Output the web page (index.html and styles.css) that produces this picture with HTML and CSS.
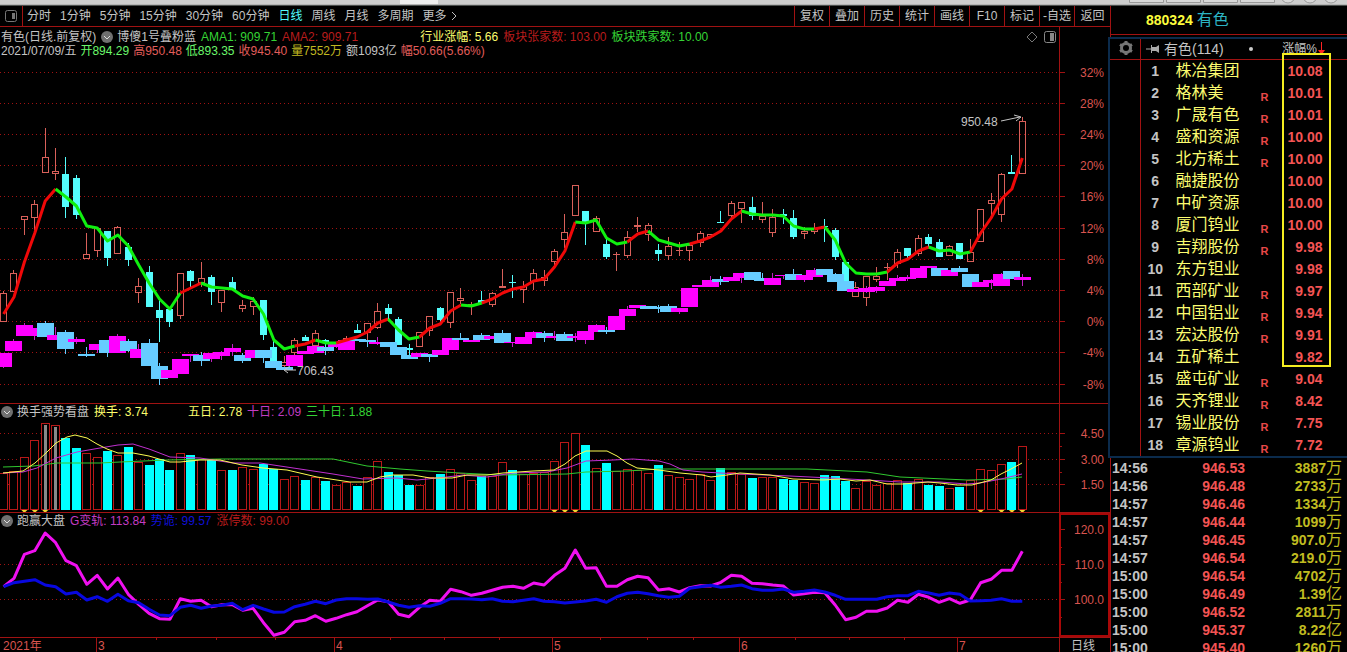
FILE: index.html
```html
<!DOCTYPE html>
<html lang="zh-CN">
<head>
<meta charset="utf-8">
<title>有色 880324</title>
<link rel="stylesheet" href="styles.css">
</head>
<body>
<svg class="strip" viewBox="0 0 1347 6" preserveAspectRatio="none" aria-hidden="true">
  <rect width="1347" height="5" fill="#cdcdcd"/><rect y="4" width="1347" height="1" fill="#b4b4b4"/><rect y="5" width="1347" height="1" fill="#4c504e"/>
  <rect x="400" width="38" height="4" fill="#eee"/>
  <g fill="#d8d8d8" stroke="#999"><path d="M1129.5 0v2.5h34V0M1166.5 0v2.5h34V0M1203.5 0v2.5h34V0M1240.5 0v2.5h34V0"/><circle cx="1288" cy="-4" r="7"/><circle cx="1310" cy="-4" r="7"/><circle cx="1331" cy="-4" r="7"/></g>
</svg>
<div class="app">
  <main class="chart">
    <nav class="toolbar">
      <button class="layout" aria-label="布局"><svg width="12" height="12" viewBox="0 0 12 12"><rect x=".5" y=".5" width="11" height="11" rx="2" fill="none" stroke="#777"/><path d="M7 3h3v6H7z" fill="#777"/></svg></button>
      <div class="periods">
        <button>分时</button><button>1分钟</button><button>5分钟</button><button>15分钟</button><button>30分钟</button><button>60分钟</button><button class="on">日线</button><button>周线</button><button>月线</button><button>多周期</button><button class="more">更多<svg width="6" height="10" viewBox="0 0 6 10"><path d="M1 1l4 4-4 4" fill="none" stroke="#c0c0c0"/></svg></button>
      </div>
      <div class="tools">
        <button>复权</button><button>叠加</button><button>历史</button><button>统计</button><button>画线</button><button>F10</button><button>标记</button><button>-自选</button><button>返回</button>
      </div>
    </nav>

    <section class="panel">
      <svg class="plot" id="price" viewBox="0 27 1110 376" role="img" aria-label="日线"></svg>
      <div class="legend main">
        <div class="line">
          <span>有色(日线.前复权)</span>
          <svg class="badge" viewBox="0 0 12 12"><circle cx="6" cy="6" r="6" fill="#707070"/><path d="M3 5l3 3 3-3" fill="none" stroke="#ddd"/></svg>
          <span>博傻1号叠粉蓝</span><span class="green">AMA1: 909.71</span><span class="red">AMA2: 909.71</span>
          <span class="yellow apart">行业涨幅: 5.66</span><span class="red">板块张家数: 103.00</span><span class="green">板块跌家数: 10.00</span>
        </div>
        <div class="line quote">
          <span>2021/07/09/五</span><span class="lime">开894.29</span><span class="rose">高950.48</span><span class="lime">低893.35</span><span class="rose">收945.40</span><span class="olive">量7552万</span><span>额1093亿</span><span class="rose">幅50.66(5.66%)</span>
        </div>
      </div>
      <div class="corner">
        <svg width="12" height="12" viewBox="0 0 12 12"><path d="M6 1l5 5-5 5-5-5z" fill="none" stroke="#777"/></svg>
        <svg width="12" height="12" viewBox="0 0 12 12"><rect x=".5" y=".5" width="11" height="11" rx="2" fill="none" stroke="#888"/><path d="M6 2h4v8H6z" fill="#888"/></svg>
      </div>
    </section>

    <section class="panel">
      <svg class="plot" id="turnover" viewBox="0 404 1110 108" role="img" aria-label="换手"></svg>
      <div class="legend">
        <div class="line">
          <svg class="badge" viewBox="0 0 12 12"><circle cx="6" cy="6" r="6" fill="#707070"/><path d="M3 5l3 3 3-3" fill="none" stroke="#ddd"/></svg>
          <span>换手强势看盘</span><span class="yellow">换手: 3.74</span><span class="yellow gap">五日: 2.78</span><span class="violet">十日: 2.09</span><span class="green">三十日: 1.88</span>
        </div>
      </div>
    </section>

    <section class="panel">
      <svg class="plot" id="strength" viewBox="0 513 1110 124" role="img" aria-label="跑赢大盘"></svg>
      <div class="legend">
        <div class="line">
          <svg class="badge" viewBox="0 0 12 12"><circle cx="6" cy="6" r="6" fill="#707070"/><path d="M3 5l3 3 3-3" fill="none" stroke="#ddd"/></svg>
          <span>跑赢大盘</span><span class="violet">G变轨: 113.84</span><span class="blue">势诡: 99.57</span><span class="red">涨停数: 99.00</span>
        </div>
      </div>
    </section>
    <svg class="plot" id="time" viewBox="0 638 1110 14" role="img" aria-label="时间"></svg>
  </main>

  <aside class="side">
    <h1 class="code"><b>880324</b> <span>有色</span></h1>
    <section class="stocks">
      <header class="stocks-head">
        <svg class="gear" viewBox="0 0 16 16"><circle cx="8" cy="8" r="4.5" fill="none" stroke="#777" stroke-width="3"/><path d="M8 1v14M2 4.500l12 7M2 11.500l12-7" stroke="#777" stroke-width="3"/><circle cx="8" cy="8" r="3" fill="#000"/></svg>
        <div class="stocks-title">
          <svg width="14" height="10" viewBox="0 0 14 10"><path d="M0 5h5" stroke="#aaa"/><path d="M5 1h1v2h4l3-2v8l-3-2H6v2H5z" fill="#aaa"/></svg>
          <span>有色(114)</span><i class="dot"></i><span class="sort">涨幅%</span><svg width="7" height="14" viewBox="0 0 7 14"><path d="M3.500 0v10" stroke="#f22"/><path d="M0 8h7l-3.500 5z" fill="#f22"/></svg>
        </div>
      </header>
      <table><tbody id="stocks"></tbody></table>
      <div class="mark"></div>
    </section>
    <table class="ticks"><tbody id="ticks"></tbody></table>
  </aside>
</div>
<script src="charts.js"></script>
</body>
</html>
```
FILE: styles.css
```css
* { box-sizing: border-box; }

body {
  margin: 0;
  height: 100vh;
  overflow: hidden;
  background: #000;
  color: #c4c4c4;
  font: 12px/14px "Liberation Sans", "Noto Sans CJK SC", sans-serif;
}

button {
  margin: 0;
  padding: 0;
  border: 0;
  background: none;
  color: inherit;
  font: inherit;
  white-space: nowrap;
}

.strip { display: block; width: 100%; height: 6px; }
.app { display: grid; grid-template-columns: minmax(0, 1fr) 237px; }

.toolbar {
  display: flex;
  height: 21px;
  border-bottom: 1px solid #a01212;
}
.layout {
  display: flex;
  align-items: center;
  justify-content: center;
  width: 23px;
  border-right: 1px solid #a01212;
}
.periods { display: flex; gap: 9px; padding-left: 4px; flex: 1; }
.periods .on { color: #54fcfc; }
.more { display: flex; align-items: center; gap: 4px; }
.tools { display: flex; }
.tools button { width: 35px; border-left: 1px solid #a01212; }
.tools button:last-child { width: 36px; }

.panel { position: relative; border-bottom: 1px solid #a01212; }
.plot { display: block; width: 100%; height: auto; }
.plot text { font-size: 12px; fill: #d9544f; }
.plot .plain { fill: #c4c4c4; }

.legend { position: absolute; top: 1px; left: 1px; }
.legend.main { top: 3px; }
.line { display: flex; align-items: center; gap: 5px; white-space: nowrap; }
.quote { gap: 4px; }
.badge { width: 12px; height: 12px; margin-right: -1px; }
.apart { margin-left: 57px; }
.gap { margin-left: 35px; }
.corner { position: absolute; top: 4px; right: 54px; display: flex; gap: 6px; }

.green { color: #35d335; }
.lime { color: #6bf76b; }
.red { color: #b81c1c; }
.rose { color: #e05d5a; }
.yellow { color: #fcfc6c; }
.olive { color: #c0b820; }
.violet { color: #c23cc2; }
.blue { color: #1010d8; }

.side { height: calc(100vh - 6px); border-left: 1px solid #a01212; }
.code {
  display: flex;
  align-items: center;
  gap: 4px;
  height: 29px;
  margin: 0;
  padding-left: 35px;
  border-bottom: 1px solid #a01212;
  font-size: 14px;
  font-weight: 400;
}
.code b { color: #fcfc3c; }
.code span { color: #2cb4c4; font-size: 16px; }

.stocks {
  position: relative;
  margin: 2px 0 0 -3px;
  background: #000;
  border: solid #0b2b4c;
  border-width: 2px 0 2px 2px;
}
.stocks-head { display: flex; height: 21px; border-bottom: 1px solid #a01212; }
.gear { width: 16px; height: 16px; margin: 1px 6px 0 8px; }
.stocks-title {
  display: flex;
  align-items: center;
  flex: 1;
  padding: 0 22px 0 5px;
  border-left: 1px solid #a01212;
  font-size: 14px;
}
.stocks-title span { margin-left: 4px; }
.dot { width: 4px; height: 4px; margin: 0 auto; border-radius: 2px; background: #ccc; }
.stocks-title .sort { margin-right: 1px; font-size: 12px; }

table { border-collapse: collapse; width: 100%; table-layout: fixed; }
td { padding: 0; white-space: nowrap; font-size: 14px; font-weight: 700; }

.stocks table { width: calc(100% - 30px); margin-left: 30px; border-left: 1px solid #a01212; }
.stocks tr { height: 22px; }
.no { width: 29px; text-align: center; }
.name { width: 91px; padding-left: 6px; color: #fcfc70; font-size: 16px; font-weight: 400; }
.margin { width: 12px; padding-top: 8px; color: #e84848; font-size: 11px; }
.pct { padding-right: 24px; color: #f45454; text-align: right; }
.mark {
  position: absolute;
  top: 14px;
  right: 16px;
  width: 49px;
  height: 314px;
  border: 2px solid #f4ec20;
}

.ticks { margin-top: 1px; }
.ticks tr { height: 18px; }
.ticks .clock { width: 60px; padding-left: 1px; }
.ticks .price { width: 74px; color: #f45454; text-align: right; }
.ticks .amount { padding-right: 5px; color: #c0bc20; text-align: right; }
.amount span { font-size: 16px; font-weight: 400; }
```
FILE: charts.js
```js
const STEP = 10.395, X0 = 3.6;
const cx = i => X0 + i * STEP;
const rows = s => s.trim().split(/\s+/);

/* top, bottom, high, low; "d" marks a falling day */
const candles = rows(`
293,322,291,322 273,292,270,292 216,220,216,235 204,218,200,230 157,173,128,173 171,174,148,180
174,207,157,218,d 178,215,175,219,d 254,259,233,259 228,251,228,257 231,258,231,266,d 227,254,226,254
247,260,243,266,d 286,293,278,303 272,307,266,307,d 310,318,298,342,d 309,322,309,327,d 273,316,273,319
271,281,270,287,d 278,283,262,287 277,292,275,305,d 290,303,290,312 282,290,277,290,d 305,309,300,312
301,307,297,315 300,335,300,340,d 347,363,340,363,d 362,366,356,368 340,353,338,358 337,341,335,341,d
333,346,330,346 340,343,339,348,d 343,345,343,345 338,341,336,341 330,333,324,333,d 323,333,323,347
311,328,303,329 308,314,304,320,d 319,345,317,345,d 348,350,344,355,d 332,347,332,347 316,331,316,336
308,320,307,323,d 292,323,292,328 298,301,288,304 304,305,302,315 300,303,291,303,d 293,305,292,307
286,288,269,288 282,283,275,298,d 286,290,281,303 273,282,269,290 277,281,270,286 251,262,249,266
232,240,214,248 185,216,185,216 211,223,211,245,d 218,232,216,232 244,257,238,259,d 254,255,252,271
237,256,231,258 225,227,217,232 225,235,223,241 250,254,244,261,d 246,256,237,260 250,251,242,256
245,251,243,261 233,243,231,247 234,237,234,237 222,223,211,223,d 203,216,201,219 202,209,202,223
207,216,197,220,d 216,220,202,223 217,233,209,237 214,216,209,224,d 218,237,210,239,d 231,234,227,239
228,232,223,234 226,227,219,242,d 230,257,228,260,d 262,281,260,285,d 287,297,282,297 276,298,276,306
276,280,267,282 267,268,263,280 252,264,249,268 248,256,248,258,d 238,254,235,256 237,244,234,247,d
242,257,239,257,d 246,256,245,256 243,259,243,259,d 252,262,239,262 209,242,209,242 200,204,193,215
174,215,173,222 172,174,155,174,d 121,174,117,174`);

/* overlaid market index: top, bottom, high, low; "b" marks a falling day */
const index = rows(`
353,367,353,368 341,351,339,351 325,336,323,336 328,336,328,340 323,337,321,337,b 335,340,327,340
332,349,330,354,b 339,342,337,344 354,356,347,357,b 344,350,344,353 340,353,340,357,b 336,353,334,353
341,351,339,352,b 349,358,344,358 343,366,339,366,b 366,379,363,385,b 370,378,370,378 359,374,359,374
354,356,354,362 355,361,352,366,b 353,359,353,362 352,356,351,360 348,352,344,356 355,361,353,363,b
350,358,350,358 350,358,350,363,b 361,368,361,368,b 367,370,367,370,b 355,366,355,366 351,354,351,354
346,353,346,353 347,351,347,355,b 344,347,344,348 340,350,340,350 339,341,339,341,b 340,342,340,347,b
342,344,337,345 342,347,342,347,b 347,355,347,355,b 355,359,355,359,b 353,357,353,357 354,357,354,362,b
350,355,350,355 338,350,338,350 338,340,333,340,b 340,342,340,342 335,340,333,340,b 336,339,336,339
333,343,330,343,b 342,343,342,347 337,344,337,344 332,338,331,338 333,338,331,342,b 336,338,331,340
334,341,332,341,b 336,338,333,342 331,340,331,344 325,332,324,332 330,332,327,334,b 316,330,316,330
309,316,306,316 305,308,305,308 306,309,306,309,b 307,309,305,313,b 306,312,304,312,b 308,312,308,314
288,307,288,307 285,287,285,287 280,287,276,287 279,282,276,285,b 277,281,277,281 273,278,273,283
272,280,272,280,b 278,281,273,281,b 278,285,273,285 275,276,275,279 274,280,269,280,b 275,280,275,282
270,277,268,277 269,275,269,275,b 274,282,273,282,b 281,291,281,291,b 289,292,289,292 288,292,286,293
287,291,286,293 281,286,281,286 278,281,275,281 277,279,275,281 268,278,268,278 266,268,266,268
268,276,268,276,b 270,276,270,276 268,272,266,272,b 274,287,274,287,b 282,287,282,287 280,283,279,289
274,286,273,286 271,279,271,279,b 277,280,274,286`);

/* a letter starts a new colour run */
const ama = rows(`r 314 297 262 233 201 189 g 197 206 226 228 241 235 246 265 283 299 309 293 r 288 283
g 287 288 289 296 299 314 340 349 346 r 344 340 g 343 343 r 340 337 332 323 319 g 330 339 337
r 328 324 311 305 g 306 303 r 299 293 289 287 281 279 267 251 222 g 223 220 238 244 242 r 234 231
g 240 243 246 244 r 241 237 231 219 211 g 214 215 215 216 226 229 229 r 227 g 240 263 273 274 274 272
r 263 259 251 247 g 251 250 254 252 r 233 218 199 189 158`);

const turnover = rows(`473 471 457 440 423 425 438d 448d 453 457 451d 455 447d 462 465d 459d 470d 453 455d 459
460d 470 470d 467 469 464d 469d 479 476 480d 477 481d 485 482 486d 477 461 472d 475d 485d 485 477 474d 469
473 480 476d 476 462 470d 474 473 472 461 442 433 445d 468 463d 471 469 470 473 465d 475 477 479 474 480
468d 472 474 478d 477 477 479d 480d 482 483 475d 476d 481d 488 481 485 483 480 483d 479 485d 486d 488
487d 480 469 470 464 462d 446`);

const ma5 = "3,473 23,471 35,463 46,453 56,443 67,437 75,435 87,438 97,444 107,449 118,453 133,453 149,456 159,459 170,462 180,462 200,460 220,460 242,465 263,468 287,470 317,477 350,482 367,482 380,477 393,475 413,475 430,478 452,478 467,475 487,475 503,473 533,471 554,470 565,464 575,456 586,451 607,451 617,456 627,463 637,468 659,470 680,473 702,475 711,477 727,475 740,473 770,475 793,479 823,480 840,479 856,481 870,480 887,484 903,484 928,482 940,483 957,485 972,485 991,480 1001,474 1011,469 1022,463";
const ma10 = "3,473 23,472 37,468 56,458 77,452 100,448 118,445 133,444 149,449 170,457 200,458 233,463 260,463 300,469 333,474 363,479 397,478 417,480 447,477 463,475 487,477 513,473 547,472 567,468 586,461 613,460 633,459 659,461 670,464 683,470 702,472 740,474 790,476 830,478 867,480 900,482 940,482 967,484 980,483 1001,479 1022,474";
const ma30 = "3,467 33,466 57,463 100,463 120,462 167,460 220,459 333,459 367,466 400,469 427,471 460,473 500,475 567,474 586,472 627,471 659,469 807,469 867,472 900,477 967,480 1007,479 1022,477";

const gain = rows(`560 535 463 452 399 428 482 497 553 526 567 534 583 613 640 656 658 596 604 601 620 614 614
631 625 668 706 697 665 661 647 664 655 644 635 617 600 605 643 650 622 601 604 568 575 586 580 571 562 559
565 549 555 526 505 450 505 503 559 559 539 529 533 570 566 576 563 557 558 547 526 529 550 551 555 558 585
581 577 578 615 659 652 634 634 624 601 607 583 592 607 596 610 600 548 538 511 511 454`);
const base = rows(`560 548 544 539 555 560 582 577 600 590 604 583 602 608 628 645 647 622 616 625 618 616 610
629 616 627 637 636 620 613 604 611 600 596 596 598 597 606 616 622 617 619 610 596 596 597 599 596 604 605
601 596 604 605 609 606 603 598 607 590 580 577 581 587 592 589 565 560 556 562 559 555 566 571 571 567 577
574 570 576 586 598 598 598 598 590 587 587 574 579 586 579 583 603 602 601 596 604 604`);

const rect = (x, y, w, h, attr) => `<rect x="${Math.round(x)}" y="${y}" width="${w}" height="${h}" ${attr}/>`;
const vline = (x, y1, y2, c) => `<path d="M${Math.round(x) + .5} ${y1}V${y2}" stroke="${c}"/>`;
const poly = (pts, c, w) => `<polyline points="${pts}" fill="none" stroke="${c}" stroke-width="${w}" stroke-linejoin="round"/>`;
const DIM = "#a01212";

function grid(levels, y1, y2, minor) {
  let s = `<path d="M1059.5 ${y1}V${y2}" stroke="${DIM}"/>`;
  for (const [y, label, plain] of levels) {
    if (!plain) s += `<path d="M0 ${y}.5H1059" stroke="${DIM}" stroke-dasharray="1 3"/>`;
    s += `<path d="M1060 ${y}.5h5" stroke="${DIM}"/><text x="1104" y="${y + 5}" text-anchor="end">${label}</text>`;
  }
  for (const y of minor || []) s += `<path d="M1060 ${y}.5h2" stroke="${DIM}"/>`;
  return s;
}

function drawPrice() {
  let s = grid([[72, "32%"], [103, "28%"], [134, "24%"], [165, "20%"], [196, "16%"], [228, "12%"], [259, "8%"],
    [290, "4%"], [321, "0%"], [352, "-4%"], [384, "-8%"]], 27, 403);
  s += '<g shape-rendering="crispEdges">';
  candles.forEach((row, i) => {
    const [t, b, h, l, d] = row.split(","), x = Math.round(cx(i) - .5), c = d ? "#54fcfc" : "#d9605a";
    if (+h < +t) s += vline(x, h, t, c);
    if (+l > +b) s += vline(x, b, l, c);
    if (d || b - t < 3) s += rect(x - 3, t, 7, Math.max(1, b - t), `fill="${c}"`);
    else s += `<rect x="${x - 2.5}" y="${+t + .5}" width="6" height="${b - t - 1}" fill="none" stroke="${c}"/>`;
  });
  index.forEach((row, i) => {
    const [t, b, h, l, d] = row.split(","), x = Math.round(cx(i) - .5), c = d ? "#66ccff" : "#ff00ff";
    s += vline(x, h, l, d ? c : "#c020c0") + rect(x - 8, t, 17, b - t, `fill="${c}"`);
  });
  s += "</g>";
  let color = "", pts = [], last = "", i = 0;
  const flush = () => { if (pts.length > 1) s += poly(pts.join(" "), color, 3); };
  for (const v of ama) {
    if (v === "r" || v === "g") {
      flush();
      color = v === "r" ? "#f00808" : "#10f010";
      pts = last ? [last] : [];
    } else {
      last = `${cx(i++).toFixed(1)},${v}`;
      pts.push(last);
    }
  }
  flush();
  s += `<text class="plain" x="961" y="126">950.48</text><path d="M1001 121l19-4M1014 115l7 2-5 4" fill="none" stroke="#c4c4c4"/>
    <text class="plain" x="297" y="375">706.43</text><path d="M285 370h11M290 366l-6 4 4 3" fill="none" stroke="#c4c4c4"/>`;
  price.innerHTML = s;
}

function drawTurnover() {
  let s = grid([[433, "4.50"], [459, "3.00"], [484, "1.50"]], 404, 512, [446, 472]) + '<g shape-rendering="crispEdges">';
  turnover.forEach((row, i) => {
    const y = parseInt(row), x = Math.round(cx(i) - .5);
    if (row.endsWith("d")) s += rect(x - 4, y, 9, 510 - y, 'fill="#00ffff"');
    else s += `<rect x="${x - 3.5}" y="${y + .5}" width="8" height="${509 - y}" fill="#000" stroke="#b81818"/>`;
    if (i === 4 || i === 5) s += rect(x - 1, y + 2, 3, 508 - y, 'fill="#888"');
  });
  s += "</g>" + poly(ma30, "#30c830", 1) + poly(ma10, "#c030d0", 1) + poly(ma5, "#fcfc50", 1);
  for (const i of [2, 3, 4, 53, 54, 55, 94, 96, 97, 98])
    s += `<path d="M${(cx(i) - 3).toFixed(1)} 510h6l-2 2h-2z" fill="#f4d830"/>`;
  turnoverSvg.innerHTML = s;
}

function drawStrength() {
  const line = a => a.map((v, i) => `${cx(i).toFixed(1)},${(400 + v / 3).toFixed(1)}`).join(" ");
  strength.innerHTML = grid([[529, "120.0", 1], [564, "110.0"], [599, "100.0"]], 513, 637, [547, 582, 617])
    + poly(line(gain), "#f010f0", 3) + poly(line(base), "#0808e0", 3)
    + '<rect x="1060" y="514" width="49" height="122" fill="none" stroke="#a80808" stroke-width="2"/>';
}

function drawTime() {
  let s = '<text x="3" y="650">2021年</text><text class="plain" x="1071" y="650">日线</text>' + vline(1059, 638, 652, DIM);
  for (const [x, n] of [[97, 3], [335, 4], [553, 5], [740, 6], [958, 7]])
    s += vline(x - 1, 638, 652, DIM) + `<text x="${x + 1}" y="650">${n}</text>`;
  for (const x of [156, 216, 275, 390, 444, 499, 600, 647, 693, 795, 849, 904]) s += vline(x, 638, 640, DIM);
  time.innerHTML = s;
}

const byId = id => document.getElementById(id);
const price = byId("price"), turnoverSvg = byId("turnover"), strength = byId("strength"), time = byId("time");
drawPrice();
drawTurnover();
drawStrength();
drawTime();

byId("stocks").innerHTML = rows(`株冶集团,,10.08 格林美,R,10.01 广晟有色,R,10.01 盛和资源,R,10.00 北方稀土,R,10.00
融捷股份,,10.00 中矿资源,,10.00 厦门钨业,R,10.00 吉翔股份,R,9.98 东方钽业,,9.98 西部矿业,R,9.97 中国铝业,R,9.94
宏达股份,R,9.91 五矿稀土,,9.82 盛屯矿业,R,9.04 天齐锂业,R,8.42 锡业股份,R,7.75 章源钨业,R,7.72`)
  .map((row, i) => {
    const [name, r, pct] = row.split(",");
    return `<tr><td class="no">${i + 1}</td><td class="name">${name}</td><td class="margin">${r}</td><td class="pct">${pct}</td></tr>`;
  }).join("");

byId("ticks").innerHTML = rows(`14:56,946.53,3887万 14:56,946.48,2733万 14:57,946.46,1334万 14:57,946.44,1099万
14:57,946.45,907.0万 14:57,946.54,219.0万 15:00,946.54,4702万 15:00,946.49,1.39亿 15:00,946.52,2811万
15:00,945.37,8.22亿 15:00,945.40,1260万`)
  .map(row => {
    const [t, p, a] = row.split(",");
    return `<tr><td class="clock">${t}</td><td class="price">${p}</td><td class="amount">${a.slice(0, -1)}<span>${a.slice(-1)}</span></td></tr>`;
  }).join("");
```
